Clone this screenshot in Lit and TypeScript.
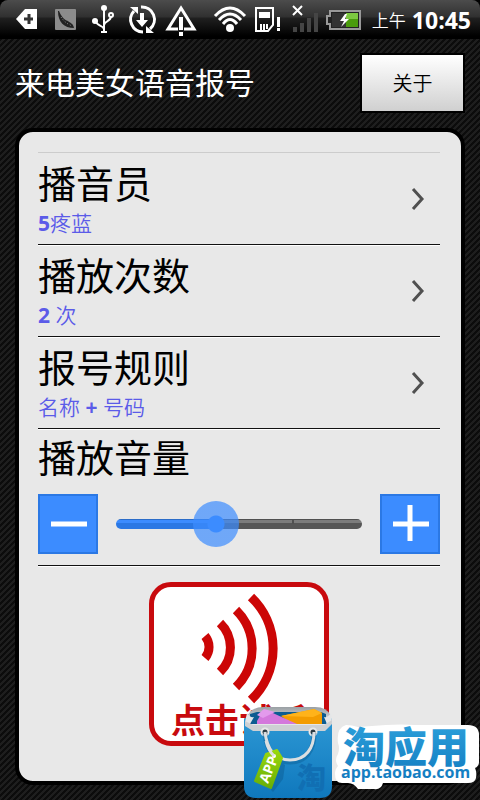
import { LitElement, html, css } from "lit";
import { customElement, property, state } from "lit/decorators.js";

@customElement("status-bar")
export class StatusBar extends LitElement {
  static styles = css`
    :host {
      display: block;
      background: #000;
    }
    .bar {
      display: flex;
      align-items: center;
      height: 39px;
      padding: 0 9px 0 7px;
      border-radius: 8px 8px 0 0;
      background: linear-gradient(#4c4c4c, #303030 17px, #202020 18px, #000 36px);
      color: #fff;
    }
    .notifications,
    .system {
      display: flex;
    }
    .system {
      margin-left: auto;
      align-items: center;
    }
    .cell {
      display: block;
      height: 38px;
    }
    .notifications .cell {
      width: 39px;
    }
    .system .cell {
      width: 38px;
    }
    .period {
      margin: 0 6px 0 9px;
      font: 350 17px/24px "Noto Sans CJK SC", sans-serif;
    }
    .time {
      font: 700 23px/38px "Open Sans", sans-serif;
    }
  `;

  render() {
    return html`
      <header class="bar">
        <div class="notifications">
          <svg class="cell" viewBox="0 0 39 38" aria-hidden="true">
            <path d="M9 18 L18 8 H30 V28 H18 Z" fill="#fff" />
            <path d="M17 18 H26 M22 13 V23" stroke="#333" stroke-width="3" fill="none" />
          </svg>
          <svg class="cell" viewBox="0 0 39 38" aria-hidden="true">
            <rect x="9" y="8" width="21" height="21" rx="1" fill="#8c8c8c" />
            <path d="M12 10 C12 21 18 27 28 27 C27 22 24 22 22 20 C18 19 15 15 13 10 Z" fill="#222" />
            <path d="M15 16 L18 20 L22 23 L26 25" stroke="#8c8c8c" stroke-dasharray="1 2" fill="none" />
          </svg>
          <svg class="cell" viewBox="0 0 39 38" aria-hidden="true">
            <g fill="none" stroke="#fff" stroke-width="2">
              <path d="M19 6 V31 M16 31 H22" />
              <path d="M11 20 C11 25 18 24 19 28" />
              <path d="M19 24 C20 19 26 21 26 15" />
              <circle cx="26" cy="14" r="2" />
            </g>
            <circle cx="19" cy="7" r="3" fill="#fff" />
            <circle cx="10" cy="20" r="3" fill="#fff" />
          </svg>
          <svg class="cell" viewBox="0 0 39 38" aria-hidden="true">
            <g fill="none" stroke="#fff" stroke-width="3">
              <path d="M10 10 A12.500 12.500 0 0 0 19 31" />
              <path d="M17 6 A12.500 12.500 0 0 1 26 28" />
            </g>
            <path d="M6 6 H14 V13 Z M22 32 V25 L30 32 Z" fill="#fff" />
            <path d="M16 12 H20 V19 H24 L18 26 L12 19 H16 Z" fill="#fff" />
          </svg>
          <svg class="cell" viewBox="0 0 39 38" aria-hidden="true">
            <path d="M18 7 L31 28 H5 Z" fill="none" stroke="#fff" stroke-width="3" />
            <path d="M15 25 H21 V31 H15 Z" fill="#181818" />
            <path d="M16 16 H20 V29 H16 Z M16 31 H20 V35 H16 Z" fill="#fff" />
          </svg>
        </div>
        <div class="system">
          <svg class="cell" viewBox="0 0 38 38" aria-label="Wi-Fi">
            <g fill="none" stroke="#fff" stroke-width="3">
              <path d="M4 15 Q19 -1 34 15" />
              <path d="M8 19 Q19 7 30 19" />
              <path d="M12 23 Q19 14 26 23" />
            </g>
            <circle cx="19" cy="27" r="4" fill="#fff" />
          </svg>
          <svg class="cell" viewBox="0 0 38 38" aria-label="SD">
            <path d="M7 7 H24 V24 L19 30 H7 Z" fill="none" stroke="#fff" stroke-width="2" />
            <path d="M10 11 H21 V17 H10 Z" fill="#fff" />
            <path d="M12 23 V30 M15 23 V30 M18 23 V28" stroke="#fff" stroke-width="2" />
            <path d="M28 16 H31 V26 H28 Z M28 27 H31 V30 H28 Z" fill="#fff" />
          </svg>
          <svg class="cell" viewBox="0 0 38 38" aria-label="无信号">
            <path d="M6 26 H10 V31 H6 Z M13 22 H17 V31 H13 Z M20 17 H24 V31 H20 Z M27 12 H31 V31 H27 Z" fill="#454545" />
            <path d="M6 5 L15 14 M15 5 L6 14" stroke="#fff" stroke-width="2" />
          </svg>
          <svg class="cell" viewBox="0 0 38 38" aria-label="充电中">
            <path d="M5 10 H35 V28 H5 V23 H2 V15 H5 Z" fill="#222" stroke="#999" stroke-width="2" />
            <path d="M7 12 H21 V26 H7 Z" fill="#333" />
            <path d="M21 12 H33 V26 H21 Z" fill="#4a9c0c" />
            <path d="M21 12 H33 V18 H21 Z" fill="#7cc840" />
            <path d="M20 13 L15 20 H19 L16 26 L24 18 H20 L22 13 Z" fill="#fff" />
          </svg>
          <span class="period">上午</span>
          <time class="time">10:45</time>
        </div>
      </header>
    `;
  }
}

@customElement("setting-row")
export class SettingRow extends LitElement {
  @property() label = "";
  @property() value = "";

  static styles = css`
    :host {
      display: block;
    }
    .row {
      display: flex;
      align-items: center;
      box-sizing: border-box;
      width: 100%;
      height: 92px;
      padding: 0 12px 0 0;
      border: 0;
      border-bottom: 1px solid #111;
      box-shadow: 0 1px #fff;
      background: none;
      text-align: left;
      cursor: pointer;
    }
    .texts {
      display: flex;
      flex-direction: column;
      flex: 1;
      padding-bottom: 6px;
    }
    .label {
      font: 400 38px/54px "Noto Sans CJK SC", sans-serif;
      color: #000;
    }
    .value {
      font: 700 21px/26px "Open Sans", "Noto Sans CJK SC", sans-serif;
      color: #5b5be8;
    }
    .value .cjk {
      font-family: "Noto Sans CJK SC", sans-serif;
      font-weight: 350;
    }
    .chevron {
      display: block;
      width: 20px;
      height: 24px;
    }
  `;

  render() {
    const parts = this.value.split(/([\u4e00-\u9fff]+)/).filter((p) => p);
    return html`
      <button class="row" type="button">
        <span class="texts">
          <span class="label">${this.label}</span>
          <span class="value"
            >${parts.map((p) => (/[\u4e00-\u9fff]/.test(p) ? html`<span class="cjk">${p}</span>` : p))}</span
          >
        </span>
        <svg class="chevron" viewBox="0 0 20 24" aria-hidden="true">
          <path d="M5 2 L14 12 L5 22" fill="none" stroke="#505050" stroke-width="3" />
        </svg>
      </button>
    `;
  }
}

@customElement("volume-control")
export class VolumeControl extends LitElement {
  @state() private level = 5;
  private readonly max = 13;

  static styles = css`
    :host {
      display: block;
      height: 136px;
      border-bottom: 1px solid #111;
      box-shadow: 0 1px #fff;
    }
    .label {
      display: block;
      font: 400 38px/54px "Noto Sans CJK SC", sans-serif;
      color: #000;
    }
    .controls {
      display: flex;
      align-items: center;
      gap: 18px;
      padding-top: 11px;
    }
    .step {
      box-sizing: border-box;
      width: 60px;
      height: 60px;
      padding: 0;
      border: 2px solid #2b78e4;
      background: #3c8cff;
      cursor: pointer;
    }
    .step svg {
      display: block;
      width: 56px;
      height: 56px;
    }
    .slider {
      flex: 1;
      min-width: 0;
      height: 46px;
      margin: 0;
      appearance: none;
      background: none;
    }
    .slider::-webkit-slider-runnable-track {
      height: 10px;
      border-radius: 5px;
      background:
        linear-gradient(#2b6cc8 1px, #3c8cff 1px 4px, #2b78e4 4px) left / var(--fill) 100% no-repeat,
        linear-gradient(#505050, #505050) 72% 0 / 2px 5px no-repeat,
        linear-gradient(#505050 1px, #7c7c7c 1px 4px, #565656 4px);
    }
    .slider::-webkit-slider-thumb {
      appearance: none;
      width: 46px;
      height: 46px;
      margin-top: -18px;
      border-radius: 50%;
      background: radial-gradient(circle, #3c8cff 8px, rgba(60, 140, 255, 0.7) 9px);
    }
  `;

  private change(delta: number) {
    this.level = Math.min(this.max, Math.max(0, this.level + delta));
  }

  render() {
    return html`
      <label class="label" for="volume">播放音量</label>
      <div class="controls">
        <button class="step" type="button" aria-label="减小音量" @click=${() => this.change(-1)}>
          <svg viewBox="0 0 56 56" aria-hidden="true">
            <path d="M11 28 H47" stroke="#fff" stroke-width="5" />
          </svg>
        </button>
        <input
          id="volume"
          class="slider"
          type="range"
          min="0"
          max=${this.max}
          .value=${String(this.level)}
          style="--fill: ${(this.level / this.max) * 100}%"
          @input=${(e: Event) => (this.level = Number((e.target as HTMLInputElement).value))}
        />
        <button class="step" type="button" aria-label="增大音量" @click=${() => this.change(1)}>
          <svg viewBox="0 0 56 56" aria-hidden="true">
            <path d="M11 28 H47 M28 9 V45" stroke="#fff" stroke-width="5" />
          </svg>
        </button>
      </div>
    `;
  }
}

@customElement("store-badge")
export class StoreBadge extends LitElement {
  static styles = css`
    :host {
      display: block;
    }
    .link {
      display: flex;
      align-items: flex-end;
    }
    .bag {
      display: block;
      width: 91px;
      height: 96px;
    }
    .name {
      display: block;
      width: 146px;
      height: 96px;
    }
    .tag-text {
      font: 700 14px "Open Sans", sans-serif;
    }
    .mark {
      font: 900 29px "Noto Sans CJK SC", sans-serif;
    }
    .title {
      font: 900 42px "Noto Sans CJK SC", sans-serif;
    }
    .site {
      font: 700 16px "Open Sans", sans-serif;
    }
  `;

  render() {
    return html`
      <a class="link" href="http://app.taobao.com">
        <svg class="bag" viewBox="0 0 91 96" aria-hidden="true">
          <defs>
            <linearGradient id="body" x1="0" y1="0" x2="0" y2="1">
              <stop offset="0" stop-color="#2f9ad6" />
              <stop offset="1" stop-color="#0f78bd" />
            </linearGradient>
            <linearGradient id="rim" x1="0" y1="0" x2="0" y2="1">
              <stop offset="0" stop-color="#9aa0a4" />
              <stop offset="1" stop-color="#e2e4e6" />
            </linearGradient>
            <linearGradient id="green" x1="0" y1="0" x2="0" y2="1">
              <stop offset="0" stop-color="#9bd80c" />
              <stop offset="1" stop-color="#67ae08" />
            </linearGradient>
          </defs>
          <path d="M1 15 L10 8 H80 L89 15 V82 Q89 94 77 94 H13 Q1 94 1 82 Z" fill="url(#body)" />
          <path d="M4 13 Q8 3 20 3 H72 Q84 3 88 12 L80 19 H12 Z" fill="url(#rim)" />
          <path d="M7 10 L14 8 H78 L83 10 V22 H7 Z" fill="#0d5c91" />
          <path d="M38 12 L71 5 L79 9 V21 H50 Z" fill="#f39c00" />
          <path d="M38 12 L71 5 L79 9 L70 13 Z" fill="#ffb31a" />
          <path d="M14 17 L21 5 L54 20 L52 22 H14 Z" fill="#d478dc" />
          <path d="M14 11 L21 5 L32 8 L20 14 Z" fill="#e39aec" />
          <path d="M4 9 Q7 14 11 13 L7 20 H84 L81 13 Q85 14 88 9 L89 17 L82 25 H10 L2 18 Z" fill="#e4e6e8" />
          <path d="M2 17 L10 21 H81 L89 16 V20 L82 27 H10 L2 22 Z" fill="#cdd0d3" />
          <g fill="#2a3942" stroke="#e8e8e8" stroke-width="2">
            <circle cx="22" cy="28" r="3.500" />
            <circle cx="70" cy="28" r="3.500" />
          </g>
          <path d="M22 30 C24 47 32 58 47 58 C63 58 71 46 71 29" fill="none" stroke="#0c6299" stroke-opacity="0.5" stroke-width="5" />
          <path d="M22 28 C24 45 32 56 47 56 C63 56 71 44 71 28" fill="none" stroke="#dcdfe1" stroke-width="3" />
          <path d="M35 57 L42 61 L40 75 L30 88 L28 86 Z" fill="#0b5e96" opacity="0.5" />
          <path d="M23 50 L34 46 L39 54 L28 84 L12 77 Z" fill="url(#green)" stroke="url(#green)" stroke-width="2" stroke-linejoin="round" />
          <circle cx="31" cy="52" r="2" fill="#fff" />
          <path d="M23 37 Q25 46 31 52" fill="none" stroke="#dcdfe1" stroke-width="3" />
          <text class="tag-text" transform="translate(25 80) rotate(-68)" fill="#fff">APP</text>
          <text class="mark" x="54" y="85" fill="#116fb3">淘</text>
        </svg>
        <svg class="name" viewBox="0 0 146 96">
          <defs>
            <linearGradient id="ink" gradientUnits="userSpaceOnUse" x1="0" y1="24" x2="0" y2="80">
              <stop offset="0" stop-color="#2a9cd8" />
              <stop offset="1" stop-color="#0f78bd" />
            </linearGradient>
          </defs>
          <path
            d="M12 21 Q18 21 24 23 L52 21 Q68 20 80 21 H134 Q145 21 145 31 V58 Q145 62 141 64 Q143 68 142 74 Q141 79 134 79 H49 Q47 86 40 85 L24 85 Q20 79 14 79 H8 Q1 79 1 70 Q1 65 4 62 Q0 56 4 50 Q6 44 4 39 Q2 24 12 21 Z"
            fill="#fff"
          />
          <text class="title" x="9" y="59" fill="url(#ink)">淘应用</text>
          <text class="site" x="7" y="74" fill="url(#ink)">app.taobao.com</text>
        </svg>
      </a>
    `;
  }
}

@customElement("app-root")
export class AppRoot extends LitElement {
  static styles = css`
    :host {
      position: relative;
      display: flex;
      flex-direction: column;
      box-sizing: border-box;
      min-height: 100vh;
      padding-bottom: 15px;
      overflow: hidden;
      background: linear-gradient(135deg, #1e1e1e 25%, #0c0c0c 25% 50%, #1e1e1e 50% 75%, #0c0c0c 75%) 0 0 / 6px 6px;
    }
    .header {
      display: flex;
      align-items: center;
      justify-content: space-between;
      padding: 14px 15px 15px;
    }
    .title {
      margin: 0;
      padding-bottom: 4px;
      font: 400 30px/40px "Noto Sans CJK SC", sans-serif;
      color: #fff;
    }
    .about {
      box-sizing: border-box;
      width: 105px;
      height: 60px;
      padding: 0;
      border: 2px solid #000;
      background: linear-gradient(#fff, #d0d0d0);
      font: 350 20px/28px "Noto Sans CJK SC", sans-serif;
      color: #000;
      cursor: pointer;
    }
    .card {
      display: flex;
      flex-direction: column;
      flex: 1;
      margin: 0 15px;
      padding: 20px 21px 35px 19px;
      border: 4px solid #000;
      border-radius: 18px;
      background: #e8e8e8;
    }
    .list {
      border-top: 1px solid #ccc;
    }
    .listen {
      display: flex;
      flex-direction: column;
      align-items: center;
      align-self: center;
      box-sizing: border-box;
      width: 180px;
      height: 164px;
      margin-top: 16px;
      padding: 0;
      border: 5px solid #c80a0e;
      border-radius: 22px;
      background: #fff;
      cursor: pointer;
    }
    .waves {
      display: block;
      width: 170px;
      height: 118px;
    }
    .listen-text {
      font: 700 34px/28px "Noto Sans CJK SC", sans-serif;
      color: #c80a0e;
    }
    .badge {
      position: absolute;
      right: 0;
      bottom: 0;
    }
  `;

  render() {
    return html`
      <status-bar></status-bar>
      <div class="header">
        <h1 class="title">来电美女语音报号</h1>
        <button class="about" type="button">关于</button>
      </div>
      <main class="card">
        <div class="list">
          <setting-row label="播音员" value="5疼蓝"></setting-row>
          <setting-row label="播放次数" value="2 次"></setting-row>
          <setting-row label="报号规则" value="名称 + 号码"></setting-row>
          <volume-control></volume-control>
        </div>
        <button class="listen" type="button">
          <svg class="waves" viewBox="154 587 170 118" aria-hidden="true">
            <g fill="none" stroke="#cc0606" stroke-width="9">
              <path d="M251 597 A71 71 0 0 1 251 700" />
              <path d="M236 610 A54 54 0 0 1 236 687" />
              <path d="M220 623 A34 34 0 0 1 220 672" />
              <path d="M205 636 A17 17 0 0 1 205 658" />
            </g>
          </svg>
          <span class="listen-text">点击试听</span>
        </button>
      </main>
      <store-badge class="badge"></store-badge>
    `;
  }
}
